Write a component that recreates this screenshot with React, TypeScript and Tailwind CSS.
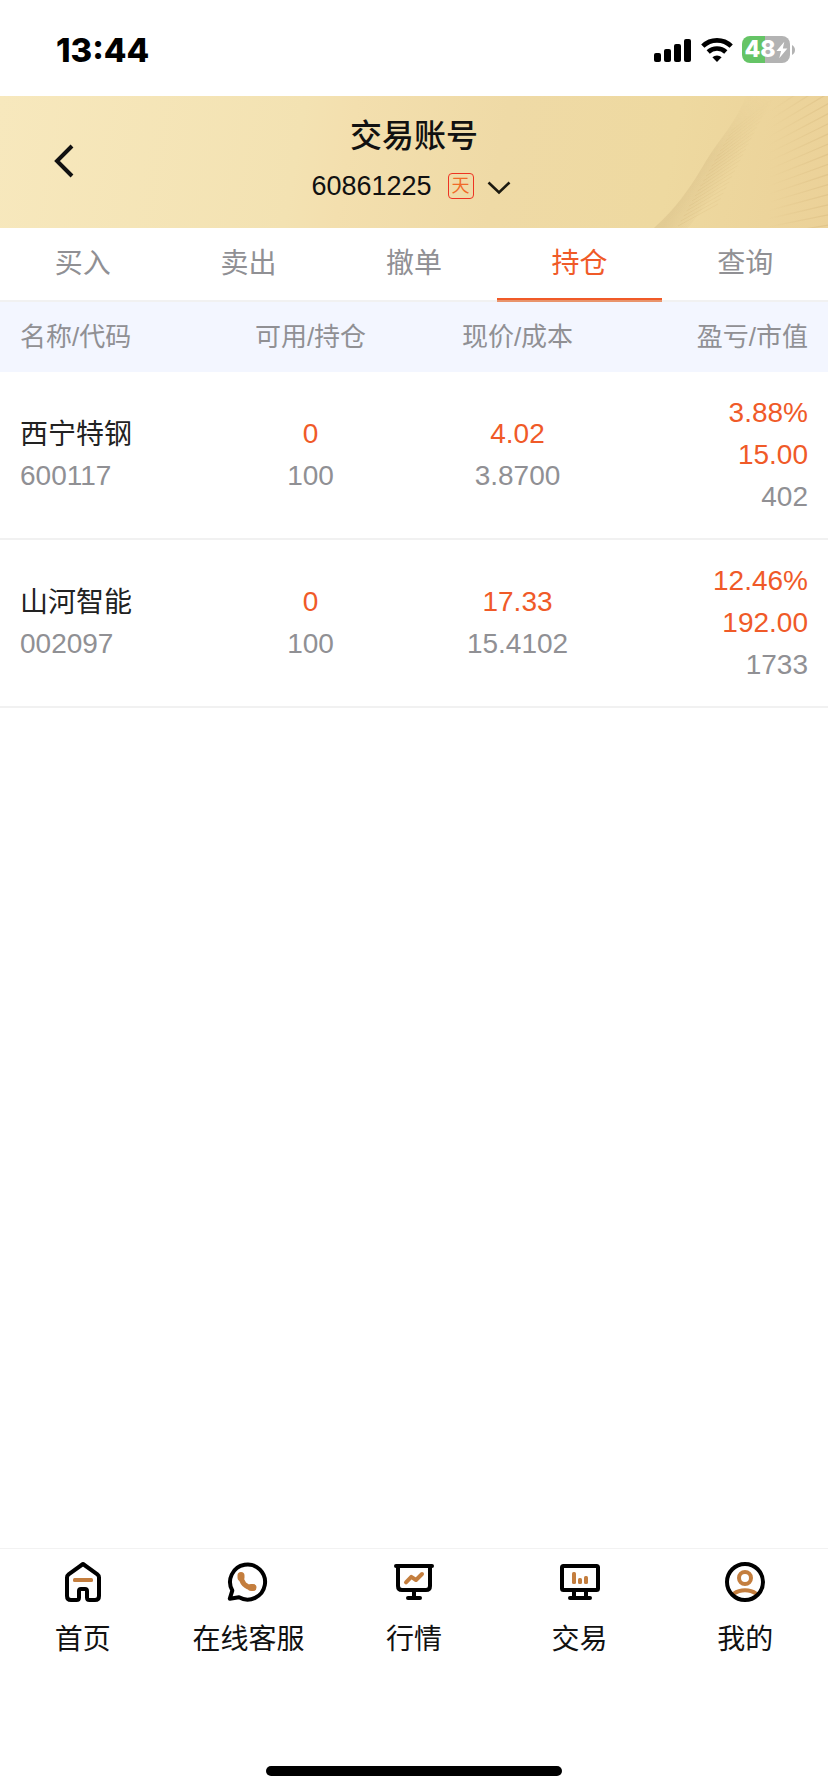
import React from "react";

const tabs = ["买入", "卖出", "撤单", "持仓", "查询"];
const columns = ["名称/代码", "可用/持仓", "现价/成本", "盈亏/市值"];

type Position = {
  name: string;
  code: string;
  available: string;
  held: string;
  price: string;
  cost: string;
  rate: string;
  profit: string;
  value: string;
};

const positions: Position[] = [
  { name: "西宁特钢", code: "600117", available: "0", held: "100", price: "4.02", cost: "3.8700", rate: "3.88%", profit: "15.00", value: "402" },
  { name: "山河智能", code: "002097", available: "0", held: "100", price: "17.33", cost: "15.4102", rate: "12.46%", profit: "192.00", value: "1733" },
];

const BRONZE = "#c47e3e";

function StatusBar() {
  return (
    <div className="flex h-24 shrink-0 items-start justify-between pl-14 pr-[33px]">
      <span className="mt-[29px] font-['Inter'] text-[33px] leading-[42px] font-extrabold text-black">13:44</span>
      <div className="mt-[36px] flex items-center">
        <svg width="38" height="24" viewBox="0 0 38 24">
          <rect x="0" y="15" width="7" height="9" rx="2" />
          <rect x="10" y="11" width="7" height="13" rx="2" />
          <rect x="20" y="6" width="7" height="18" rx="2" />
          <rect x="30" y="1" width="7" height="23" rx="2" />
        </svg>
        <svg className="ml-[9px]" width="32" height="26" viewBox="0 0 32 26" fill="none" stroke="#000" strokeWidth="4.6">
          <path d="M1.800 9.200a20.300 20.300 0 0 1 28.400 0" />
          <path d="M7.200 15a12.700 12.700 0 0 1 17.600 0" />
          <path d="M16 25l-4.600-4.700a6.600 6.600 0 0 1 9.200 0z" fill="#000" stroke="none" />
        </svg>
        <div className="ml-[9px] flex h-[27px] w-12 items-center justify-center rounded-[8px] bg-[linear-gradient(90deg,#65c466_48%,#b3b3b3_48%)]">
          <span className="font-['Inter'] text-[23px] leading-none font-extrabold text-white">48</span>
          <svg width="12" height="18" viewBox="0 0 13 18" fill="#fff">
            <path d="M9 0L0.500 10.200h5L3.500 18 12.300 7.400H7.400z" />
          </svg>
        </div>
        <svg className="ml-[2px]" width="3" height="10" viewBox="0 0 3 10" fill="#b3b3b3">
          <path d="M0 0c2 1 3 3 3 5s-1 4-3 5z" />
        </svg>
      </div>
    </div>
  );
}

function HeaderWaves() {
  const rays = Array.from({ length: 16 }, (_, i) => {
    const y = 136 - 8 * i;
    return `M135 ${y + 4}L202 ${y - 52 * (0.14 + 0.042 * i)}`;
  });
  const hatching = Array.from({ length: 20 }, (_, i) => {
    const x = 50 + 2.8 * i;
    const y = 130 - 5 * i;
    return `M${x} ${y}l40 ${-22 - i * 0.5}`;
  });
  return (
    <svg className="absolute top-0 right-0" width="200" height="132" viewBox="0 0 200 132" fill="none">
      <defs>
        <linearGradient id="fold" x1="70" y1="70" x2="96" y2="86" gradientUnits="userSpaceOnUse">
          <stop offset="0.1" stopColor="#cdb27c" stopOpacity="0.32" />
          <stop offset="1" stopColor="#cdb27c" stopOpacity="0" />
        </linearGradient>
        <linearGradient id="ray" x1="140" y1="0" x2="200" y2="0" gradientUnits="userSpaceOnUse">
          <stop stopColor="#c9a768" stopOpacity="0" />
          <stop offset="1" stopColor="#c9a768" stopOpacity="0.28" />
        </linearGradient>
        <linearGradient id="hatch" x1="60" y1="80" x2="118" y2="112" gradientUnits="userSpaceOnUse">
          <stop stopColor="#c9a768" stopOpacity="0.25" />
          <stop offset="1" stopColor="#c9a768" stopOpacity="0" />
        </linearGradient>
        <linearGradient id="fade" x1="0" y1="0" x2="0" y2="132" gradientUnits="userSpaceOnUse">
          <stop stopColor="#000" />
          <stop offset="0.45" stopColor="#fff" />
        </linearGradient>
        <mask id="soften">
          <rect width="200" height="132" fill="url(#fade)" />
        </mask>
      </defs>
      <g mask="url(#soften)">
        <path d="M118 0C110 24 92 42 78 65C60 96 46 114 26 132H60L160 0Z" fill="url(#fold)" />
        {hatching.map((d) => (
          <path key={d} d={d} stroke="url(#hatch)" />
        ))}
      </g>
      {rays.map((d) => (
        <path key={d} d={d} stroke="url(#ray)" strokeWidth="1.3" />
      ))}
    </svg>
  );
}

function Header() {
  return (
    <header className="relative flex h-[132px] shrink-0 flex-col items-center bg-[linear-gradient(100deg,#f7e8bd_0%,#f3e2b2_36%,#f3dfae_42%,#efdaa6_60%,#eed9a0_80%,#ebd198_100%)] text-[#111]">
      <HeaderWaves />
      <svg className="absolute top-[48px] left-[53px]" width="22" height="34" viewBox="0 0 22 34" fill="none" stroke="#111" strokeWidth="4">
        <path d="M19 2L4 17l15 15" />
      </svg>
      <h1 className="relative mt-4 text-[32px] leading-[48px] font-medium">交易账号</h1>
      <div className="relative mt-[9px] flex h-[34px] items-center pr-[6px]">
        <span className="text-[27px] leading-[34px]">60861225</span>
        <span className="ml-[16px] flex size-[26px] items-center justify-center rounded-[4px] border border-[#ee3322] text-[18px] leading-none text-[#f06a28]">天</span>
        <svg className="mt-1 ml-[13px]" width="24" height="14" viewBox="0 0 24 14" fill="none" stroke="#1c1a10" strokeWidth="2.6">
          <path d="M1.500 1.500L12 11.500 22.500 1.500" />
        </svg>
      </div>
    </header>
  );
}

function Cell({ lines, align }: { lines: { text: string; tone: string }[]; align: string }) {
  return (
    <div className={`flex flex-col ${align}`}>
      {lines.map((l, i) => (
        <span key={i} className={`text-[28px] leading-[42px] ${l.tone}`}>{l.text}</span>
      ))}
    </div>
  );
}

const UP = "text-[#f05a28]";
const DIM = "text-[#909094]";

function PositionRow({ p }: { p: Position }) {
  return (
    <div className="grid h-[168px] grid-cols-4 items-center border-b-2 border-[#f1f1f1]">
      <Cell align="items-start pl-5" lines={[{ text: p.name, tone: "pt-px -mb-px text-[#222]" }, { text: p.code, tone: DIM }]} />
      <Cell align="items-center" lines={[{ text: p.available, tone: UP }, { text: p.held, tone: DIM }]} />
      <Cell align="items-center" lines={[{ text: p.price, tone: UP }, { text: p.cost, tone: DIM }]} />
      <Cell align="items-end pr-5" lines={[{ text: p.rate, tone: UP }, { text: p.profit, tone: UP }, { text: p.value, tone: DIM }]} />
    </div>
  );
}

function Icon({ children }: { children: React.ReactNode }) {
  return (
    <svg width="44" height="44" viewBox="0 0 44 44" fill="none" stroke="#000" strokeWidth="4" strokeLinecap="round" strokeLinejoin="round">
      {children}
    </svg>
  );
}

const navItems = [
  {
    label: "首页",
    icon: (
      <Icon>
        <path d="M22 4L7.600 14.300Q6 15.500 6 17.500V36Q6 40 10 40H15.500Q18 40 18 37.500V31Q18 29 20 29H24Q26 29 26 31V37.500Q26 40 28.500 40H34Q38 40 38 36V17.500Q38 15.500 36.400 14.300Z" />
        <rect x="12" y="18" width="20" height="4" rx="1.500" fill={BRONZE} stroke="none" />
      </Icon>
    ),
  },
  {
    label: "在线客服",
    icon: (
      <Icon>
        <path d="M3.800 38.700L6.300 30.600A17.500 17.500 0 1 1 13 37.300Z" />
        <path d="M15 15.500C15 22.500 19.500 27.600 27 27.600" stroke={BRONZE} strokeWidth="5" />
        <path d="M15 15.500V17.500M25.200 27.600H27" stroke={BRONZE} strokeWidth="7" />
      </Icon>
    ),
  },
  {
    label: "行情",
    icon: (
      <Icon>
        <path d="M4 6H40M6 6V26Q6 30 10 30H34Q38 30 38 26V6M22 30V38M16 38H28" />
        <path d="M14 22.300L19.300 16.800L24 20L30 14" stroke={BRONZE} />
      </Icon>
    ),
  },
  {
    label: "交易",
    icon: (
      <Icon>
        <rect x="4" y="6" width="36" height="24" rx="1.500" />
        <path d="M16 32V37M28 32V37M12 38H32" />
        <g fill={BRONZE} stroke="none">
          <rect x="14" y="12" width="4" height="12" rx="1.500" />
          <rect x="20" y="18" width="4" height="6" rx="1.500" />
          <rect x="26" y="16" width="4" height="8" rx="1.500" />
        </g>
      </Icon>
    ),
  },
  {
    label: "我的",
    icon: (
      <Icon>
        <path d="M11 33.500C17 29 27 29 33 33.500" stroke={BRONZE} />
        <circle cx="22" cy="18" r="6" stroke={BRONZE} />
        <circle cx="22" cy="22" r="18" />
      </Icon>
    ),
  },
];

export default function App() {
  return (
    <div className="flex h-[1792px] w-[828px] flex-col bg-white font-['Liberation_Sans','Noto_Sans_CJK_SC',sans-serif]">
      <StatusBar />
      <Header />
      <nav className="grid h-[74px] shrink-0 grid-cols-5 border-b-2 border-[#f1f1f1] text-[28px] text-[#909094]">
        {tabs.map((t) =>
          t === "持仓" ? (
            <div key={t} className="relative flex justify-center pt-[15px] leading-[42px] text-[#f05a28]">
              {t}
              <span className="absolute inset-x-0 -bottom-[2px] h-1 border-b-2 border-[#e9946c] bg-[#f05a28]" />
            </div>
          ) : (
            <div key={t} className="flex justify-center pt-[15px] leading-[42px]">{t}</div>
          ),
        )}
      </nav>
      <div className="grid h-[70px] shrink-0 grid-cols-4 items-center bg-[#f3f6ff] pt-px text-[26px] text-[#909094]">
        {columns.map((c, i) => (
          <span key={c} className={i === 0 ? "pl-5" : i === 3 ? "pr-5 text-right" : "text-center"}>{c}</span>
        ))}
      </div>
      <main className="flex-1">
        {positions.map((p) => (
          <PositionRow key={p.code} p={p} />
        ))}
      </main>
      <footer className="flex h-[244px] shrink-0 flex-col justify-between border-t border-[#f2f2f2]">
        <div className="grid grid-cols-5 pt-[11px]">
          {navItems.map((n) => (
            <div key={n.label} className="flex flex-col items-center">
              {n.icon}
              <span className="mt-[15px] text-[28px] leading-[42px] text-[#111]">{n.label}</span>
            </div>
          ))}
        </div>
        <div className="mb-4 h-[10px] w-[296px] self-center rounded-full bg-black" />
      </footer>
    </div>
  );
}
